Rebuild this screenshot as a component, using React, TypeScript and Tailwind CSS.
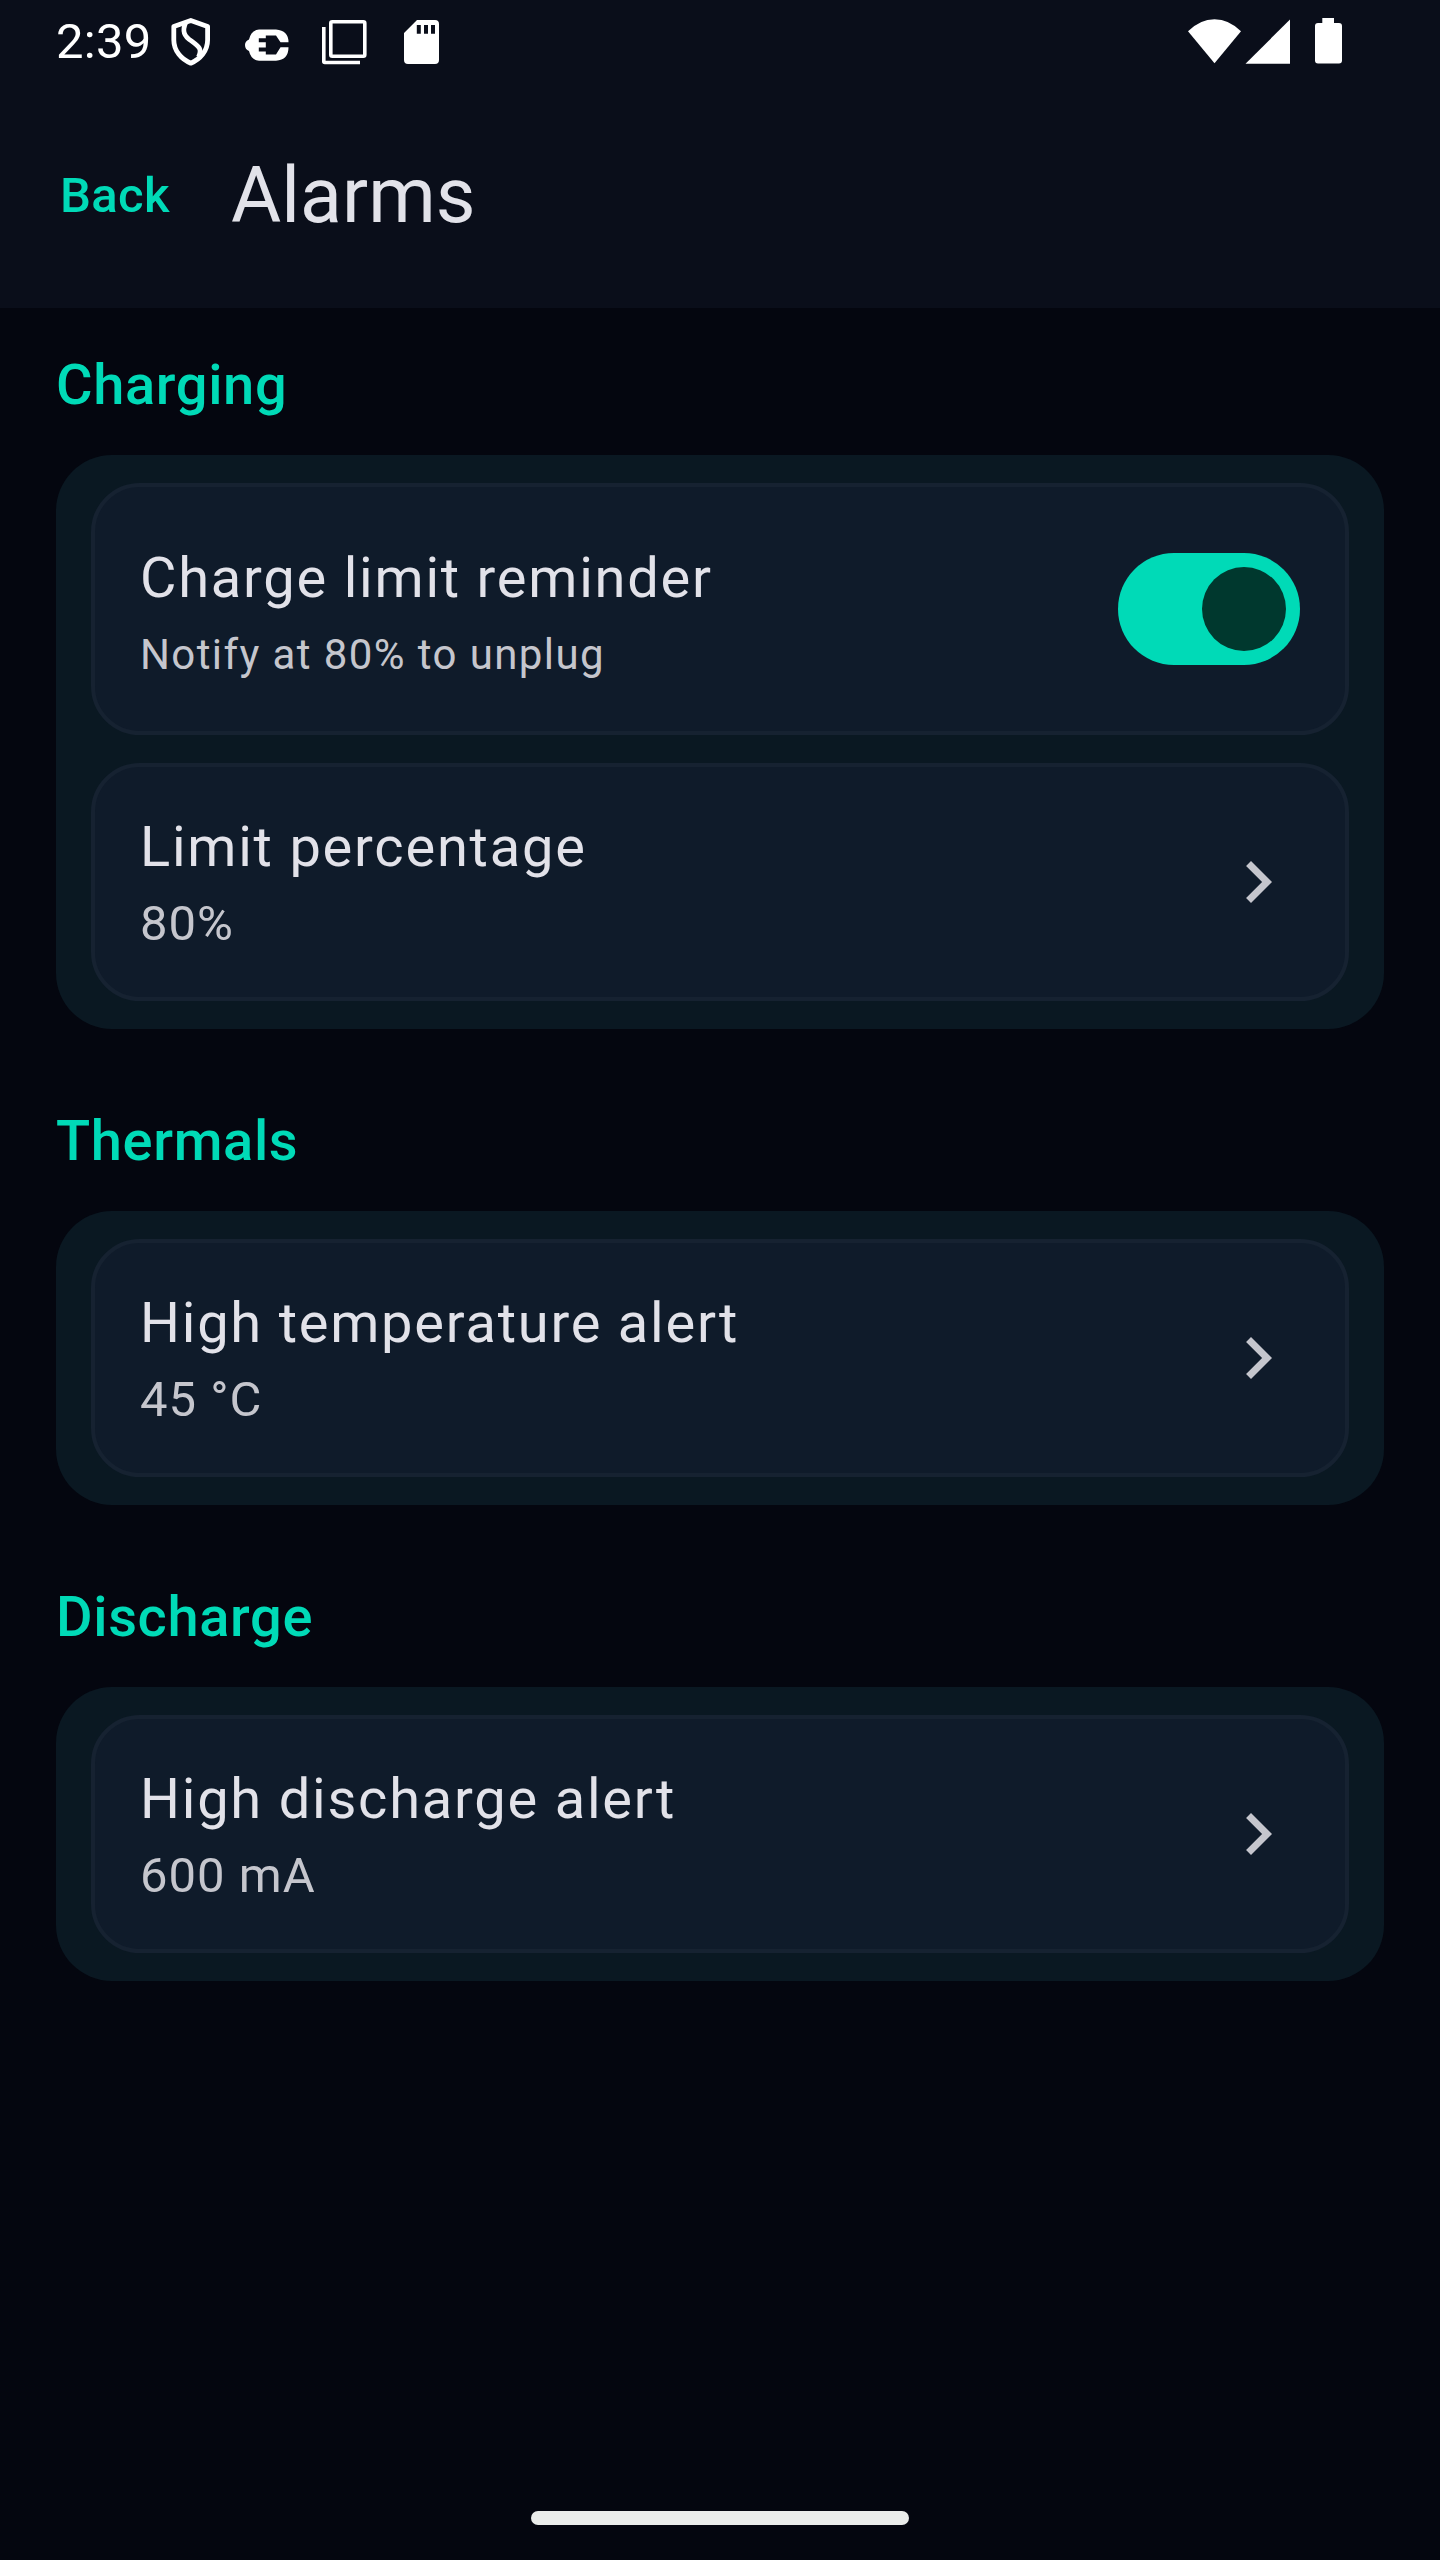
import type { ReactNode } from "react";

function StatusBar() {
  return (
    <div className="flex h-[84px] items-start text-white">
      <span className="ml-14 mt-[13px] text-[49px] leading-[58px] tracking-[0.3px]">2:39</span>
      <svg className="absolute left-[160px] top-0 h-[84px] w-[300px]" viewBox="160 0 300 84" fill="none">
        <g stroke="#fff" strokeWidth="4.800" strokeLinejoin="round">
          <path d="M190.800 20.500L207.600 26.500V40C207.600 51 200 59.500 190.800 63.200C181.600 59.500 173.800 51 173.800 40V26.500Z" />
          <path d="M185.500 23C182 31 184 36.500 191.500 41C199 46.500 202.500 49 198.500 57" />
        </g>
        <path fill="#fff" d="M259 29.500H276Q288.500 30.500 288.500 42.300H280.500L276 35.500H265.800V38.200H258.800V42.200H265.800V47.600H258.800V51.600H265.800V54.500H276L280.500 47.300H288.500Q288.500 60 276 60.800H259Q251 60 249 51Q245 49.500 245 45Q245 41 249 39.500Q251 30.500 259 29.500Z" />
        <g stroke="#fff" strokeWidth="3.600">
          <rect x="330.800" y="21.800" width="34" height="34.500" rx="1.500" />
          <path d="M323.800 27V61.500Q323.800 62.500 324.800 62.500H360" />
        </g>
        <path fill="#fff" fillRule="evenodd" d="M417 20H435Q439 20 439 24V60Q439 64 435 64H408Q404 64 404 60V33ZM416.800 25V33.700H420.800V25ZM424 25V33.700H428V25ZM431 25V33.700H435V25Z" />
      </svg>
      <svg className="absolute left-[1180px] top-0 h-[84px] w-[180px]" viewBox="1180 0 180 84" fill="#fff">
        <path d="M1188 31.300Q1200 19.200 1214.500 19.200Q1229 19.200 1241 31.300L1214.500 63.200Z" />
        <path d="M1245.500 63.700L1290 19.500V63.700Z" />
        <path d="M1322.300 18H1334V23H1339Q1342 23 1342 26V60.500Q1342 63.500 1339 63.500H1318Q1315 63.500 1315 60.500V26Q1315 23 1318 23H1322.300Z" />
      </svg>
    </div>
  );
}

function Chevron() {
  return (
    <svg className="size-[84px] shrink-0" viewBox="0 0 24 24" fill="#c5c6cd">
      <path d="M8.590 16.590L13.170 12L8.590 7.410L10 6l6 6l-6 6z" />
    </svg>
  );
}

function Switch() {
  return (
    <div className="flex h-28 w-[182px] shrink-0 items-center justify-end rounded-full bg-[#00dab7] pr-3.5">
      <div className="size-[84px] rounded-full bg-[#00382e]" />
    </div>
  );
}

function Section({ title, children }: { title: string; children: ReactNode }) {
  return (
    <section className="flex flex-col gap-7">
      <h2 className="text-[56px] font-medium leading-[84px] tracking-[0.65px] text-[#00dab7]">{title}</h2>
      <div className="flex flex-col gap-7 rounded-[56px] bg-[#0a1822] px-[35px] py-7">{children}</div>
    </section>
  );
}

const cardClass =
  "flex items-center justify-between rounded-[49px] border-4 border-[#162231] bg-[#0f1b2a] px-[45px]";
const titleClass = "text-[56px] leading-[84px] tracking-[1.78px] text-[#e2e2e9]";

function LinkCard({ title, value }: { title: string; value: string }) {
  return (
    <div className={`${cardClass} h-[238px]`}>
      <div>
        <div className={titleClass}>{title}</div>
        <div className="text-[49px] leading-[70px] tracking-[1px] text-[#c5c6cd]">{value}</div>
      </div>
      <Chevron />
    </div>
  );
}

export default function App() {
  return (
    <div className="relative flex h-[2560px] w-[1440px] flex-col bg-[#04060f] font-['Roboto',sans-serif]">
      <header className="h-[308px] bg-[#0a0e1a]">
        <StatusBar />
        <div className="flex h-56 items-center pl-[60px]">
          <span className="-mt-px text-[49px] font-medium leading-[70px] tracking-[0.35px] text-[#00dab7]">Back</span>
          <h1 className="ml-[61px] text-[77px] leading-[98px] tracking-[0.1px] text-[#e2e2e9]">Alarms</h1>
        </div>
      </header>
      <main className="flex grow flex-col gap-[70px] px-14 pt-[35px]">
        <Section title="Charging">
          <div className={`${cardClass} h-[252px]`}>
            <div className="flex flex-col gap-[7px]">
              <div className={titleClass}>Charge limit reminder</div>
              <div className="text-[42px] leading-[56px] tracking-[1.4px] text-[#c5c6cd]">Notify at 80% to unplug</div>
            </div>
            <Switch />
          </div>
          <LinkCard title="Limit percentage" value="80%" />
        </Section>
        <Section title="Thermals">
          <LinkCard title="High temperature alert" value="45 °C" />
        </Section>
        <Section title="Discharge">
          <LinkCard title="High discharge alert" value="600 mA" />
        </Section>
      </main>
      <div className="mb-[35px] h-3.5 w-[378px] self-center rounded-full bg-[#ebedeb]" />
    </div>
  );
}
